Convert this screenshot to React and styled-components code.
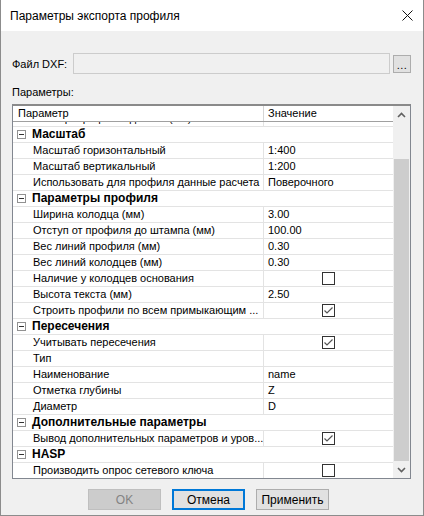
import React from 'react';
import styled, { createGlobalStyle } from 'styled-components';

const GlobalStyle = createGlobalStyle`
  html, body {
    margin: 0;
    padding: 0;
    background: #f0f0f0;
  }
  * {
    box-sizing: border-box;
  }
`;

const Window = styled.div`
  width: 424px;
  height: 516px;
  display: flex;
  flex-direction: column;
  background: #f0f0f0;
  border: 1px solid #8c8c8c;
  border-top: none;
  font-family: "Liberation Sans", Arial, sans-serif;
  font-size: 11px;
  color: #000;
  overflow: hidden;
`;

const TitleBar = styled.div`
  height: 31px;
  flex: none;
  display: flex;
  align-items: center;
  justify-content: space-between;
  padding: 0 9px 0 9px;
  background: #fff;
  font-size: 12px;
`;

const CloseBtn = styled.div`
  width: 14px;
  height: 14px;
  display: flex;
  align-items: center;
  justify-content: center;
`;

const Body = styled.div`
  flex: 1;
  display: flex;
  flex-direction: column;
  padding: 22px 12px 0 11px;
`;

const FileRow = styled.div`
  display: flex;
  align-items: center;
  height: 21px;
`;

const FileLabel = styled.div`
  width: 61px;
  flex: none;
`;

const FileInput = styled.div`
  width: 317px;
  height: 21px;
  border: 1px solid #cccccc;
  background: #f0f0f0;
`;

const Browse = styled.div`
  width: 18px;
  height: 18px;
  margin-left: 3px;
  border: 1px solid #adadad;
  background: #e1e1e1;
  display: flex;
  align-items: flex-end;
  justify-content: center;
  padding-bottom: 3px;
  font-size: 11px;
  line-height: 8px;
  letter-spacing: 0.5px;
`;

const SectionLabel = styled.div`
  margin-top: 11px;
  height: 14px;
  line-height: 14px;
`;

const Grid = styled.div`
  margin-top: 5px;
  width: 399px;
  height: 375px;
  display: flex;
  border: 1px solid #828790;
  border-top: 2px solid #8a8a8a;
  background: #fff;
`;

const GridMain = styled.div`
  flex: 1;
  display: flex;
  flex-direction: column;
  overflow: hidden;
`;

const Header = styled.div`
  flex: none;
  height: 16px;
  display: flex;
  border-bottom: 1px solid #a0a0a0;
`;

const HeadCell = styled.div`
  width: ${p => p.w}px;
  flex: none;
  padding-left: ${p => p.pad}px;
  line-height: 15px;
  border-right: ${p => (p.divider ? '1px solid #d5d5d5' : 'none')};
`;

const Rows = styled.div`
  flex: 1;
  overflow: hidden;
`;

const Row = styled.div`
  height: ${p => (p.cut ? 5 : 16)}px;
  display: flex;
  align-items: flex-end;
  overflow: hidden;
  border-bottom: 1px solid #e3e3e3;
`;

const NameCell = styled.div`
  width: 250px;
  height: 15px;
  flex: none;
  padding-left: ${p => (p.group ? 4 : 20)}px;
  display: flex;
  align-items: center;
  gap: 6px;
  line-height: 15px;
  font-weight: ${p => (p.group ? 'bold' : 'normal')};
  font-size: ${p => (p.group ? '12px' : '11px')};
  white-space: nowrap;
  overflow: hidden;
`;

const ValueCell = styled.div`
  flex: 1;
  height: 15px;
  border-left: 1px solid #e3e3e3;
  padding-left: 4px;
  display: flex;
  align-items: center;
  justify-content: ${p => (p.center ? 'center' : 'flex-start')};
  line-height: 15px;
  white-space: nowrap;
`;

const Toggle = styled.div`
  width: 9px;
  height: 9px;
  border: 1px solid #919191;
  display: flex;
  align-items: center;
  justify-content: center;
  flex: none;
  &::after {
    content: '';
    width: 5px;
    height: 1px;
    background: #333;
  }
`;

const Check = styled.div`
  width: 13px;
  height: 13px;
  border: 1px solid #333;
  background: #fff;
  margin-left: -4px;
  display: flex;
  align-items: center;
  justify-content: center;
`;

const Scrollbar = styled.div`
  width: 17px;
  flex: none;
  display: flex;
  flex-direction: column;
  background: #f0f0f0;
`;

const ScrollBtn = styled.div`
  height: 17px;
  flex: none;
  display: flex;
  align-items: center;
  justify-content: center;
`;

const Track = styled.div`
  flex: 1;
  display: flex;
  flex-direction: column;
  padding: 0 1px;
`;

const Thumb = styled.div`
  margin-top: 36px;
  flex: 1;
  background: #cdcdcd;
`;

const Buttons = styled.div`
  display: flex;
  gap: 11px;
  margin-top: 10px;
  padding-left: 76px;
`;

const Button = styled.div`
  width: 73px;
  height: 21px;
  display: flex;
  align-items: center;
  justify-content: center;
  background: ${p => (p.disabled ? '#cccccc' : '#e1e1e1')};
  color: ${p => (p.disabled ? '#838383' : '#000')};
  border: ${p => (p.primary ? '2px solid #0078d7' : p.disabled ? '1px solid #bfbfbf' : '1px solid #adadad')};
  font-size: 12px;
`;

const Chevron = ({ up }) => (
  <svg width="9" height="6" viewBox="0 0 9 6">
    <path
      d={up ? 'M1 5 L4.5 1.5 L8 5' : 'M1 1 L4.5 4.5 L8 1'}
      fill="none"
      stroke="#606060"
      strokeWidth="1.6"
    />
  </svg>
);

const Tick = () => (
  <svg width="11" height="11" viewBox="0 0 11 11">
    <path d="M1.5 5.5 L4 8 L9.5 2.5" fill="none" stroke="#555" strokeWidth="1.2" />
  </svg>
);

const rows = [
  { cut: true, name: 'Размер шрифта подписей (мм)', value: '' },
  { group: true, name: 'Масштаб' },
  { name: 'Масштаб горизонтальный', value: '1:400' },
  { name: 'Масштаб вертикальный', value: '1:200' },
  { name: 'Использовать для профиля данные расчета', value: 'Поверочного' },
  { group: true, name: 'Параметры профиля' },
  { name: 'Ширина колодца (мм)', value: '3.00' },
  { name: 'Отступ от профиля до штампа (мм)', value: '100.00' },
  { name: 'Вес линий профиля (мм)', value: '0.30' },
  { name: 'Вес линий колодцев (мм)', value: '0.30' },
  { name: 'Наличие у колодцев основания', check: false },
  { name: 'Высота текста (мм)', value: '2.50' },
  { name: 'Строить профили по всем примыкающим ...', check: true },
  { group: true, name: 'Пересечения' },
  { name: 'Учитывать пересечения', check: true },
  { name: 'Тип', value: '' },
  { name: 'Наименование', value: 'name' },
  { name: 'Отметка глубины', value: 'Z' },
  { name: 'Диаметр', value: 'D' },
  { group: true, name: 'Дополнительные параметры' },
  { name: 'Вывод дополнительных параметров и уров...', check: true },
  { group: true, name: 'HASP' },
  { name: 'Производить опрос сетевого ключа', check: false },
];

function GridRow({ row }) {
  if (row.group) {
    return (
      <Row>
        <NameCell group>
          <Toggle />
          {row.name}
        </NameCell>
      </Row>
    );
  }
  const isCheck = row.check !== undefined;
  return (
    <Row cut={row.cut}>
      <NameCell>{row.name}</NameCell>
      <ValueCell center={isCheck}>
        {isCheck ? <Check>{row.check && <Tick />}</Check> : row.value}
      </ValueCell>
    </Row>
  );
}

export default function App() {
  return (
    <>
      <GlobalStyle />
      <Window>
        <TitleBar>
          <span>Параметры экспорта профиля</span>
          <CloseBtn>
            <svg width="11" height="11" viewBox="0 0 11 11">
              <path d="M0.5 0.5 L10.5 10.5 M10.5 0.5 L0.5 10.5" stroke="#111" strokeWidth="1" />
            </svg>
          </CloseBtn>
        </TitleBar>
        <Body>
          <FileRow>
            <FileLabel>Файл DXF:</FileLabel>
            <FileInput />
            <Browse>...</Browse>
          </FileRow>
          <SectionLabel>Параметры:</SectionLabel>
          <Grid>
            <GridMain>
              <Header>
                <HeadCell w={251} pad={5} divider>Параметр</HeadCell>
                <HeadCell w={129} pad={4}>Значение</HeadCell>
              </Header>
              <Rows>
                {rows.map((row, i) => (
                  <GridRow row={row} key={i} />
                ))}
              </Rows>
            </GridMain>
            <Scrollbar>
              <ScrollBtn><Chevron up /></ScrollBtn>
              <Track><Thumb /></Track>
              <ScrollBtn><Chevron /></ScrollBtn>
            </Scrollbar>
          </Grid>
          <Buttons>
            <Button disabled>OK</Button>
            <Button primary>Отмена</Button>
            <Button>Применить</Button>
          </Buttons>
        </Body>
      </Window>
    </>
  );
}
